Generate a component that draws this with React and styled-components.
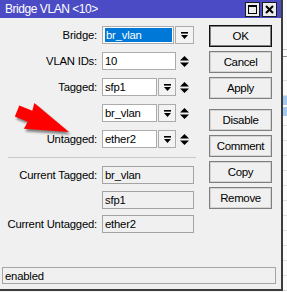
import React from "react";
import styled, { createGlobalStyle } from "styled-components";

const GlobalStyle = createGlobalStyle`
  html, body {
    margin: 0;
    padding: 0;
  }
  body {
    width: 287px;
    height: 292px;
    overflow: hidden;
    background: #f4f4f4;
    font-family: "Liberation Sans", Arial, sans-serif;
    font-size: 11.3px;
    letter-spacing: -0.2px;
    color: #000;
  }
`;

const Desktop = styled.div`
  display: flex;
  width: 287px;
  height: 292px;
  overflow: hidden;
`;

const Dialog = styled.div`
  position: relative;
  flex: none;
  display: flex;
  flex-direction: column;
  width: 281px;
  height: 289px;
  background: #f0f0f0;
  border-right: 2px solid #3c3c3c;
  border-bottom: 2px solid #3c3c3c;
`;

// the list window that peeks out behind the dialog
const BackList = styled.div`
  flex: 1;
  background:
    linear-gradient(#a6c9f0, #a6c9f0) 0 96px / 100% 9px no-repeat,
    linear-gradient(#a6c9f0, #a6c9f0) 0 107px / 100% 9px no-repeat,
    linear-gradient(#c4c4c4, #c4c4c4) 0 49px / 100% 1px no-repeat,
    linear-gradient(#8e8e8e, #8e8e8e) 0 56px / 100% 1px no-repeat,
    repeating-linear-gradient(
      to bottom,
      transparent 0 14px,
      #e0e0e0 14px 15px
    ) 0 66px / 100% 100% no-repeat,
    #fbfbfb;
`;

const TitleBar = styled.div`
  flex: none;
  display: flex;
  align-items: center;
  height: 18px;
  padding: 0 4px 0 5px;
  background: #4b4bc6;
  color: #fff;
  font-size: 12px;
  letter-spacing: -0.45px;
`;

const TitleButtons = styled.div`
  display: flex;
  gap: 2px;
  margin-left: auto;
`;

const TitleButton = styled.div`
  box-sizing: border-box;
  display: grid;
  place-items: center;
  width: 15px;
  height: 15px;
  background: #ececec;
  border: 1px solid #1c1c1c;
`;

const Body = styled.div`
  flex: 1;
  display: flex;
`;

const Form = styled.div`
  flex: none;
  width: 209px;
  padding-top: 8px;
  display: flex;
  flex-direction: column;
`;

const FieldGrid = styled.div`
  display: grid;
  grid-template-columns: 97px auto;
  column-gap: 5px;
  row-gap: ${(p) => p.$gap}px;
  grid-auto-rows: 18px;
`;

const Label = styled.div`
  text-align: right;
  white-space: nowrap;
  line-height: 18px;
`;

const Field = styled.div`
  display: flex;
  align-items: center;
  height: 18px;
`;

const Box = styled.div`
  box-sizing: border-box;
  display: flex;
  align-items: center;
  width: ${(p) => p.$w}px;
  height: 18px;
  padding: 0 1px 0 2px;
  border: 1px solid ${(p) => (p.$readOnly ? "#a3a3a3" : "#acacac")};
  background: ${(p) => (p.$readOnly ? "#f0f0f0" : "#fff")};
  white-space: nowrap;
  overflow: hidden;
`;

const Selected = styled.span`
  flex: 1;
  align-self: stretch;
  display: flex;
  align-items: center;
  margin: 1px 0;
  padding-left: 1px;
  background: #0078d7;
  color: #fff;
`;

const DropButton = styled.div`
  box-sizing: border-box;
  display: grid;
  place-items: center;
  width: ${(p) => p.$w}px;
  height: 18px;
  margin-left: ${(p) => p.$gap}px;
  border: 1px solid #acacac;
  background: #f3f3f3;
`;

const Spin = styled.svg`
  margin-left: 4px;
  flex: none;
`;

const Separator = styled.div`
  height: 1px;
  margin: 9px 13px 8px 8px;
  background: #c9c9c9;
`;

const ButtonColumn = styled.div`
  flex: none;
  width: 63px;
  padding-top: 7px;
  display: flex;
  flex-direction: column;
  gap: 4px;
`;

const Button = styled.div`
  box-sizing: border-box;
  display: flex;
  align-items: center;
  justify-content: center;
  height: 22px;
  margin-top: ${(p) => (p.$spaced ? 6 : 0)}px;
  border: 1px solid ${(p) => (p.$default ? "#111" : "#7f7f7f")};
  box-shadow: inset 0 0 0 1px ${(p) => (p.$default ? "#7f7f7f" : "#d4d4d4")};
  background: #f0f0f0;
  font-size: 11.5px;
  letter-spacing: -0.35px;
`;

const StatusBar = styled.div`
  box-sizing: border-box;
  flex: none;
  height: 17px;
  margin: 0 5px 5px 2px;
  padding-left: 2px;
  display: flex;
  align-items: center;
  border: 1px solid #a5a5a5;
  background: #f0f0f0;
`;

const ArrowLayer = styled.svg`
  position: absolute;
  left: 0;
  top: 0;
  pointer-events: none;
`;

const DropIcon = () => (
  <svg width="7" height="7" viewBox="0 0 7 7">
    <rect x="0" y="0" width="7" height="1.6" fill="#000" />
    <polygon points="0,3 7,3 3.5,7" fill="#000" />
  </svg>
);

const Spinner = () => (
  <Spin width="9" height="11" viewBox="0 0 9 11">
    <polygon points="4.5,0 9,4.6 0,4.6" fill="#000" />
    <polygon points="0,6.4 9,6.4 4.5,11" fill="#000" />
  </Spin>
);

const topRows = [
  { label: "Bridge:", value: "br_vlan", kind: "bridge" },
  { label: "VLAN IDs:", value: "10", kind: "spin" },
  { label: "Tagged:", value: "sfp1", kind: "list" },
  { label: "", value: "br_vlan", kind: "list" },
  { label: "Untagged:", value: "ether2", kind: "list" },
];

const currentRows = [
  { label: "Current Tagged:", value: "br_vlan" },
  { label: "", value: "sfp1" },
  { label: "Current Untagged:", value: "ether2" },
];

const buttons = ["OK", "Cancel", "Apply", "Disable", "Comment", "Copy", "Remove"];

function renderField(row) {
  if (row.kind === "bridge") {
    return (
      <Field>
        <Box $w={72}>
          <Selected>{row.value}</Selected>
        </Box>
        <DropButton $w={19} $gap={1}>
          <DropIcon />
        </DropButton>
      </Field>
    );
  }
  if (row.kind === "spin") {
    return (
      <Field>
        <Box $w={74}>{row.value}</Box>
        <Spinner />
      </Field>
    );
  }
  return (
    <Field>
      <Box $w={55}>{row.value}</Box>
      <DropButton $w={18} $gap={1}>
        <DropIcon />
      </DropButton>
      <Spinner />
    </Field>
  );
}

// red arrow pointing at the Untagged field, tip at (69,132)
const arrowShape = "0,0 -43,-14 -42,-6 -56,-6 -56,6 -42,6 -43,14";

export default function App() {
  return (
    <>
      <GlobalStyle />
      <Desktop>
        <Dialog>
          <TitleBar>
            Bridge VLAN &lt;10&gt;
            <TitleButtons>
              <TitleButton>
                <svg width="9" height="9" viewBox="0 0 9 9">
                  <rect x="0.5" y="0.5" width="8" height="8" fill="none" stroke="#000" />
                  <rect x="0" y="0" width="9" height="2" fill="#000" />
                </svg>
              </TitleButton>
              <TitleButton>
                <svg width="9" height="9" viewBox="0 0 9 9">
                  <path d="M1 1 L8 8 M8 1 L1 8" stroke="#000" strokeWidth="2" />
                </svg>
              </TitleButton>
            </TitleButtons>
          </TitleBar>

          <Body>
            <Form>
              <FieldGrid $gap={8}>
                {topRows.map((row, i) => (
                  <React.Fragment key={i}>
                    <Label>{row.label}</Label>
                    {renderField(row)}
                  </React.Fragment>
                ))}
              </FieldGrid>
              <Separator />
              <FieldGrid $gap={6.5}>
                {currentRows.map((row, i) => (
                  <React.Fragment key={i}>
                    <Label>{row.label}</Label>
                    <Field>
                      <Box $w={92} $readOnly>
                        {row.value}
                      </Box>
                    </Field>
                  </React.Fragment>
                ))}
              </FieldGrid>
            </Form>

            <ButtonColumn>
              {buttons.map((b) => (
                <Button key={b} $default={b === "OK"} $spaced={b === "Disable"}>
                  {b}
                </Button>
              ))}
            </ButtonColumn>
          </Body>

          <StatusBar>enabled</StatusBar>

          <ArrowLayer width="90" height="145" viewBox="0 0 90 145">
            <defs>
              <filter id="blur" x="-20%" y="-20%" width="140%" height="140%">
                <feGaussianBlur stdDeviation="1.3" />
              </filter>
            </defs>
            <g transform="translate(70.5 134.5) rotate(22)" filter="url(#blur)" opacity="0.55">
              <polygon points={arrowShape} fill="#222" />
            </g>
            <g transform="translate(69 132) rotate(22)">
              <polygon points={arrowShape} fill="#ff0000" />
            </g>
          </ArrowLayer>
        </Dialog>
        <BackList />
      </Desktop>
    </>
  );
}
